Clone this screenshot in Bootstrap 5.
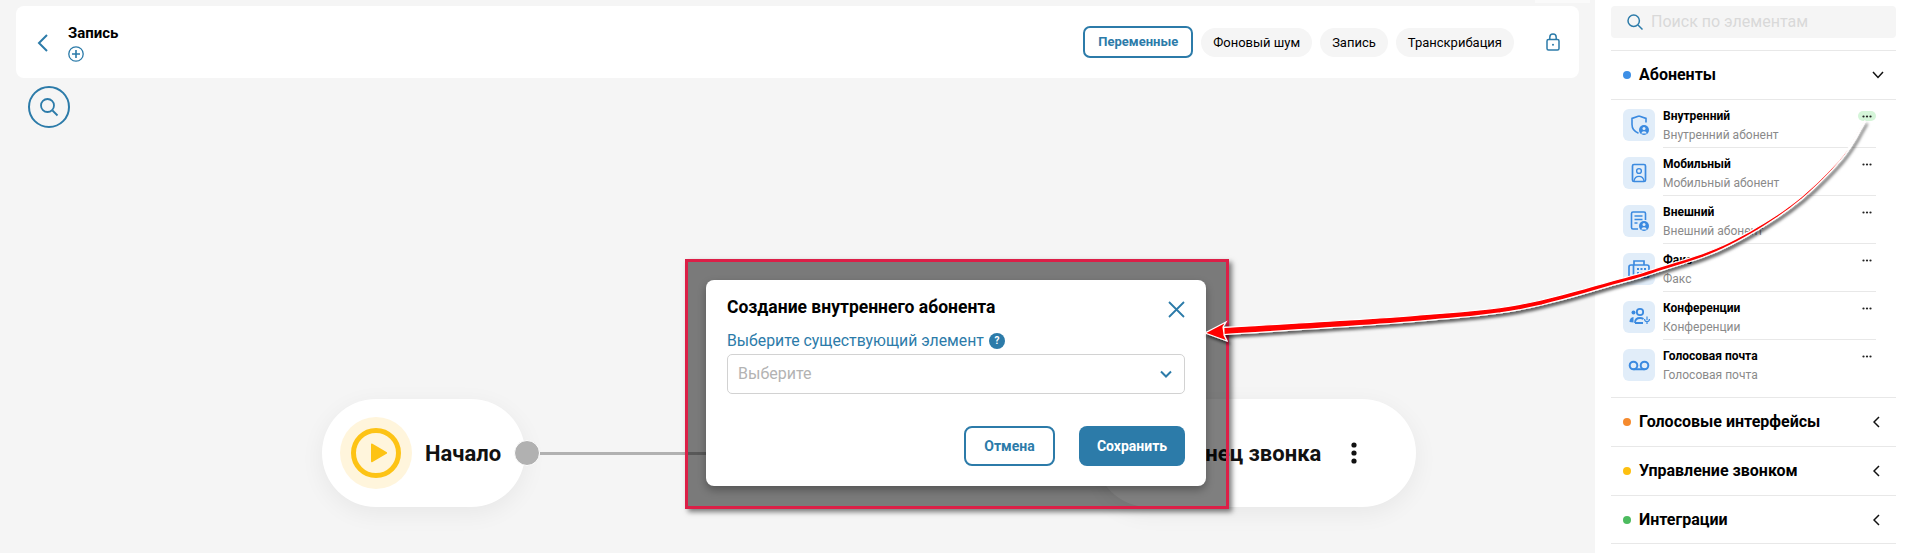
<!DOCTYPE html>
<html lang="ru">
<head>
    <meta charset="UTF-8">
    <meta name="viewport" content="width=device-width, initial-scale=1.0">
    <title>Запись</title>
    <link href="https://cdn.jsdelivr.net/npm/bootstrap@5.3.3/dist/css/bootstrap.min.css" rel="stylesheet">
    <script src="https://cdn.jsdelivr.net/npm/bootstrap@5.3.3/dist/js/bootstrap.bundle.min.js"></script>
    <style>
        html, body { height: 553px; overflow: hidden; }
        body { font-family: Roboto, "Liberation Sans", sans-serif; color: #000; background: #fff; }
        .accent { color: #2c7ba9; }
        .page-wrap { height: 553px; }
        .canvas-area { width: 1595px; background: #f5f5f5; padding: 6px 16px 0; position: relative; flex: none; }
        .flow-credit { position: absolute; top: -9px; right: 5px; font-size: 10px; color: #999; background: rgba(255,255,255,.5); padding: 0 3px; line-height: 12px; }
        .top-bar { height: 72px; background: #fff; border-radius: 8px; padding: 0 19px 0 21px; }
        .back-btn { width: 31px; }
        .flow-title { font-size: 15px; font-weight: 700; line-height: 18px; margin-top: 1px; }
        .tab-pill { font-size: 13px; height: 29px; line-height: 29px; padding: 0 12px; border-radius: 15px; background: #f5f5f5; white-space: nowrap; }
        .tab-pill.active-tab { height: 32px; line-height: 28px; width: 110px; text-align: center; padding: 0; background: #fff; border: 2px solid #2c7ba9; border-radius: 7px; color: #2c7ba9; font-weight: 700; }
        .zoom-btn { width: 42px; height: 42px; margin: 8px 0 0 12px; border: 2px solid #2c7ba9; border-radius: 50%; }
        .flow-node { position: absolute; top: 399px; height: 108px; background: #fff; border-radius: 54px; box-shadow: 0 6px 24px rgba(0,0,0,.06); font-size: 22px; font-weight: 700; color: #111; }
        .start-node { left: 322px; width: 203px; padding-left: 18px; gap: 13px; }
        .end-node { left: 1095px; width: 321px; padding-left: 84px; gap: 30px; }
        .node-halo { width: 72px; height: 72px; border-radius: 50%; background: #fff5dc; flex: none; }
        .node-handle { position: absolute; left: 514px; top: 440px; width: 26px; height: 26px; border-radius: 50%; background: #b1b1b1; border: 1px solid #fff; }
        .node-edge { position: absolute; left: 540px; top: 451.5px; width: 560px; height: 3px; background: #b1b1b1; }
        .shot-frame { position: absolute; left: 685px; top: 259px; width: 544px; height: 250px; border: 3px solid #dc1f47; background: rgba(0,0,0,.5); box-shadow: 3px 3px 5px rgba(0,0,0,.5); }
        .dialog-box { position: absolute; left: 18px; top: 18px; width: 500px; height: 206px; background: #fff; border-radius: 8px; padding: 17px 21px 19px; box-shadow: 0 4px 8px rgba(0,0,0,.3); }
        .dialog-title { font-size: 17.5px; font-weight: 700; line-height: 20px; margin: 0; }
        .field-label { font-size: 15.8px; line-height: 20px; color: #2c7ba9; margin: 13px 0 3px; gap: 5px; }
        .help-dot { width: 16px; height: 16px; border-radius: 50%; background: #2c7ba9; color: #fff; font-size: 10px; font-weight: 700; line-height: 16px; text-align: center; }
        .dialog-box .form-select { height: 40px; font-size: 16px; color: #b3b3b3; padding-left: 10px; border-color: #d2d2d2; border-radius: 5px; background-image: none; }
        .select-wrap svg { position: absolute; right: 13px; top: 16px; pointer-events: none; }
        .btn-cancel, .btn-save { height: 40px; border-radius: 8px; font-size: 14px; font-weight: 700; padding: 0; }
        .btn-cancel { width: 91px; border: 2px solid #2c7ba9; color: #2c7ba9; background: #fff; }
        .btn-save { width: 106px; border: 0; color: #fff; background: #2c7ba9; }
        .side-panel { width: 317px; padding: 6px 16px 0; background: #fff; flex: none; }
        .search-box { height: 32px; background: #f5f5f5; border-radius: 4px; padding-left: 16px; gap: 8px; color: #d9d9d9; font-size: 16px; }
        .group-row { height: 49px; border-top: 1px solid #e8e8e8; font-size: 16px; font-weight: 700; padding: 0 12px; }
        .group-dot { width: 8px; height: 8px; border-radius: 50%; margin-right: 8px; flex: none; }
        .group-end { border-bottom: 1px solid #e8e8e8; }
        .item-list { padding: 9px 0 0 12px; border-top: 1px solid #e8e8e8; }
        .item-row { height: 48px; gap: 8px; }
        .item-icon { width: 32px; height: 32px; border-radius: 6px; background: #e1edf9; flex: none; }
        .item-text { width: 213px; height: 39px; border-bottom: 1px solid #e8e8e8; font-size: 12px; line-height: 19px; position: relative; }
        .item-row:last-child .item-text { border-bottom: 0; }
        .item-name { font-weight: 700; margin-top: -2px; }
        .item-sub { color: #8a8a8a; }
        .item-more { position: absolute; right: 0; top: 2px; width: 18px; height: 10px; border-radius: 5px; }
        .item-more.is-hover { background: #d5f5d9; }
        .arrow-layer { position: absolute; left: 0; top: 0; width: 1912px; height: 553px; pointer-events: none; }
    </style>
</head>
<body>
<div class="page-wrap d-flex">
    <div class="canvas-area">
        <div class="flow-credit">React Flow</div>
        <div class="top-bar d-flex align-items-center">
            <div class="back-btn">
                <svg width="12" height="18" viewBox="0 0 12 18" fill="none" stroke="#2c7ba9" stroke-width="2"><path d="M10 1 2 9l8 8"/></svg>
            </div>
            <div>
                <div class="flow-title">Запись</div>
                <svg class="d-block mt-1" width="16" height="16" viewBox="0 0 16 16" fill="none" stroke="#2c7ba9" stroke-width="1.3"><circle cx="8" cy="8" r="7.2"/><path d="M8 4v8M4 8h8" stroke-width="1.6"/></svg>
            </div>
            <div class="ms-auto d-flex align-items-center gap-2">
                <div class="tab-pill active-tab">Переменные</div>
                <div class="tab-pill">Фоновый шум</div>
                <div class="tab-pill">Запись</div>
                <div class="tab-pill">Транскрибация</div>
                <svg class="ms-4" width="14" height="18" viewBox="0 0 14 18" fill="none" stroke="#2c7ba9" stroke-width="1.5"><rect x="1" y="6.5" width="12" height="10.5" rx="1.5"/><path d="M3.8 6.5V4.2a3.2 3.2 0 0 1 6.4 0v2.3"/><circle cx="7" cy="11.8" r="1" fill="#2c7ba9" stroke="none"/></svg>
            </div>
        </div>
        <div class="zoom-btn d-flex align-items-center justify-content-center">
            <svg width="20" height="20" viewBox="0 0 20 20" fill="none" stroke="#2c7ba9" stroke-width="1.8"><circle cx="8.5" cy="8.5" r="6.5"/><path d="m13.5 13.5 5 5"/></svg>
        </div>

        <div class="node-edge"></div>
        <div class="flow-node start-node d-flex align-items-center">
            <div class="node-halo d-flex align-items-center justify-content-center">
                <svg width="50" height="50" viewBox="0 0 50 50"><circle cx="25" cy="25" r="22.5" fill="none" stroke="#fdc315" stroke-width="5"/><path d="M20 16.5a1 1 0 0 1 1.5-.8l14 8.3a1 1 0 0 1 0 1.8l-14 8.3a1 1 0 0 1-1.5-.8z" fill="#fdc315"/></svg>
            </div>
            <span>Начало</span>
        </div>
        <div class="node-handle"></div>
        <div class="flow-node end-node d-flex align-items-center">
            <span>Конец звонка</span>
            <svg width="6" height="22" viewBox="0 0 6 22" fill="#111"><circle cx="3" cy="3" r="2.6"/><circle cx="3" cy="11" r="2.6"/><circle cx="3" cy="19" r="2.6"/></svg>
        </div>

        <div class="shot-frame">
            <div class="dialog-box">
                <div class="d-flex justify-content-between align-items-start">
                    <h5 class="dialog-title">Создание внутреннего абонента</h5>
                    <svg class="mt-1" width="17" height="17" viewBox="0 0 17 17" fill="none" stroke="#2c7ba9" stroke-width="1.8"><path d="m1 1 15 15M16 1 1 16"/></svg>
                </div>
                <div class="field-label d-flex align-items-center">Выберите существующий элемент <span class="help-dot">?</span></div>
                <div class="select-wrap position-relative">
                    <select class="form-select"><option selected>Выберите</option></select>
                    <svg width="12" height="8" viewBox="0 0 12 8" fill="none" stroke="#2c7ba9" stroke-width="2"><path d="m1 1.5 5 5 5-5"/></svg>
                </div>
                <div class="d-flex justify-content-end gap-4 mt-4 pt-2">
                    <button type="button" class="btn btn-cancel">Отмена</button>
                    <button type="button" class="btn btn-save">Сохранить</button>
                </div>
            </div>
        </div>
    </div>

    <aside class="side-panel">
        <div class="search-box d-flex align-items-center mb-2 pb-0">
            <svg width="16" height="16" viewBox="0 0 16 16" fill="none" stroke="#2c7ba9" stroke-width="1.5"><circle cx="6.7" cy="6.7" r="5.7"/><path d="m11 11 4.5 4.5"/></svg>
            <span>Поиск по элементам</span>
        </div>
        <div class="pt-1"></div>
        <div class="group-row d-flex align-items-center">
            <span class="group-dot" style="background:#3d8fe6"></span>Абоненты
            <svg class="ms-auto" width="12" height="8" viewBox="0 0 12 8" fill="none" stroke="#111" stroke-width="1.5"><path d="m1 1 5 5.5L11 1"/></svg>
        </div>
        <div class="item-list" id="items"></div>
        <div class="group-row d-flex align-items-center">
            <span class="group-dot" style="background:#f58a2e"></span>Голосовые интерфейсы
            <svg class="ms-auto me-1" width="7" height="12" viewBox="0 0 7 12" fill="none" stroke="#111" stroke-width="1.5"><path d="M6 1 1 6l5 5"/></svg>
        </div>
        <div class="group-row d-flex align-items-center">
            <span class="group-dot" style="background:#fdc010"></span>Управление звонком
            <svg class="ms-auto me-1" width="7" height="12" viewBox="0 0 7 12" fill="none" stroke="#111" stroke-width="1.5"><path d="M6 1 1 6l5 5"/></svg>
        </div>
        <div class="group-row group-end d-flex align-items-center">
            <span class="group-dot" style="background:#4cbb5f"></span>Интеграции
            <svg class="ms-auto me-1" width="7" height="12" viewBox="0 0 7 12" fill="none" stroke="#111" stroke-width="1.5"><path d="M6 1 1 6l5 5"/></svg>
        </div>
    </aside>
</div>

<svg class="arrow-layer" viewBox="0 0 1912 553">
    <defs><filter id="arrowShadow" x="-5%" y="-20%" width="110%" height="140%"><feDropShadow dx="2" dy="3" stdDeviation="1.5" flood-color="#000" flood-opacity=".6"/></filter></defs>
    <path id="arrowPath" fill="#f00" stroke="#fff" stroke-width="1.2" filter="url(#arrowShadow)"/>
</svg>

<script>
    const badge = '<circle cx="21" cy="21" r="5" fill="#3b8ae0"/><circle cx="21" cy="19.6" r="1.5" fill="#e1edf9"/><path d="M18.2 24.4a2.9 2.9 0 0 1 5.6 0z" fill="#e1edf9"/>';
    const items = [
        { name: 'Внутренний', sub: 'Внутренний абонент', hover: true,
          icon: '<path d="M16 7l7 2.4v4.2M16 7 9 9.4v6.2c0 4.2 3 7.3 6.5 8.6" fill="none" stroke="#3b8ae0" stroke-width="1.6"/>' + badge },
        { name: 'Мобильный', sub: 'Мобильный абонент',
          icon: '<rect x="9.5" y="7.5" width="13" height="17" rx="1.5" fill="none" stroke="#3b8ae0" stroke-width="1.7"/><circle cx="16" cy="14" r="2.4" fill="none" stroke="#3b8ae0" stroke-width="1.4"/><path d="M11 24c.5-3 2.5-4.6 5-4.6s4.500 1.600 5 4.600" fill="none" stroke="#3b8ae0" stroke-width="1.4"/>' },
        { name: 'Внешний', sub: 'Внешний абонент',
          icon: '<path d="M15 24H10a1.500 1.500 0 0 1-1.500-1.500v-14A1.500 1.500 0 0 1 10 7h11a1.500 1.500 0 0 1 1.500 1.500V15" fill="none" stroke="#3b8ae0" stroke-width="1.6"/><path d="M11.500 11h8M11.500 14.500h8M11.500 18h3" stroke="#3b8ae0" stroke-width="1.5"/>' + badge },
        { name: 'Факс', sub: 'Факс',
          icon: '<path d="M11 12V8h10v4" fill="none" stroke="#3b8ae0" stroke-width="1.7"/><rect x="6" y="12" width="20" height="12.500" rx="2" fill="none" stroke="#3b8ae0" stroke-width="1.7"/><path d="M10.500 12v12.500" stroke="#3b8ae0" stroke-width="1.700"/><path d="M14 15h2v2h-2zM17.500 15h2v2h-2zM21 15h2v2h-2zM14 19h2v2h-2zM17.500 19h2v2h-2zM21 19h2v2h-2z" fill="#3b8ae0"/>' },
        { name: 'Конференции', sub: 'Конференции',
          icon: '<circle cx="17" cy="11" r="3.200" fill="none" stroke="#3b8ae0" stroke-width="1.800"/><circle cx="10.500" cy="11.500" r="2" fill="#3b8ae0"/><path d="M6.500 21c0-3 1.500-4.500 4-5v5.500z" fill="#3b8ae0"/><path d="M12 22c0-3.500 2-5 5-5 1.500 0 2.500.3 3.500 1M12 22h8" fill="none" stroke="#3b8ae0" stroke-width="1.800"/><path d="M24 15.500v3.500M21.500 18a2.500 2.500 0 0 0 5 0M24 20.500V23" fill="none" stroke="#3b8ae0" stroke-width="1.200"/>' },
        { name: 'Голосовая почта', sub: 'Голосовая почта',
          icon: '<circle cx="10.500" cy="16.500" r="3.800" fill="none" stroke="#3b8ae0" stroke-width="2"/><circle cx="21.500" cy="16.500" r="3.800" fill="none" stroke="#3b8ae0" stroke-width="2"/><path d="M10.500 20.300h11" stroke="#3b8ae0" stroke-width="2"/>' }
    ];

    function displayItems() {
        const list = document.getElementById('items');
        items.forEach(item => {
            const row = document.createElement('div');
            row.className = 'item-row d-flex';
            row.innerHTML =
                '<svg class="item-icon" viewBox="0 0 32 32">' + item.icon + '</svg>' +
                '<div class="item-text"><div class="item-name">' + item.name + '</div><div class="item-sub">' + item.sub + '</div>' +
                '<div class="item-more d-flex align-items-center justify-content-center ' + (item.hover ? 'is-hover' : '') + '">' +
                '<svg width="10" height="3" viewBox="0 0 10 3" fill="#222"><circle cx="1.500" cy="1.500" r="1.100"/><circle cx="5" cy="1.500" r="1.100"/><circle cx="8.500" cy="1.500" r="1.100"/></svg></div></div>';
            list.appendChild(row);
        });
    }

    // tapered arrow shaft: centre points with half width, smoothed and offset to both sides
    function drawArrow() {
        const pts = [[1865,121,.4],[1840,160,.7],[1790,207,1.1],[1723,247,1.6],[1657,270,2],[1620,281,2.2],[1520,307,2.6],[1420,318,3],[1320,325,3.3],[1224,331,3.6]];
        const upper = [], lower = [];
        for (let i = 0; i < pts.length - 1; i++) {
            const p0 = pts[Math.max(i - 1, 0)], p1 = pts[i], p2 = pts[i + 1], p3 = pts[Math.min(i + 2, pts.length - 1)];
            for (let t = 0; t < 1; t += 0.1) {
                const cr = k => 0.5 * (2 * p1[k] + (p2[k] - p0[k]) * t + (2 * p0[k] - 5 * p1[k] + 4 * p2[k] - p3[k]) * t * t + (3 * p1[k] - p0[k] - 3 * p2[k] + p3[k]) * t * t * t);
                const dx = p2[0] - p1[0], dy = p2[1] - p1[1], len = Math.hypot(dx, dy);
                const w = p1[2] + (p2[2] - p1[2]) * t;
                upper.push([cr(0) + dy / len * w * -1, cr(1) + dx / len * w]);
                lower.push([cr(0) - dy / len * w * -1, cr(1) - dx / len * w]);
            }
        }
        const line = a => a.map(p => p[0].toFixed(1) + ' ' + p[1].toFixed(1)).join(' L');
        const d = 'M1865 121 L' + line(upper) + ' L1224 335 L1227 341 L1205 333 L1226 322 L1223 327 L' + line(lower.reverse()) + ' Z';
        document.getElementById('arrowPath').setAttribute('d', d);
    }

    displayItems();
    drawArrow();
</script>
</body>
</html>
